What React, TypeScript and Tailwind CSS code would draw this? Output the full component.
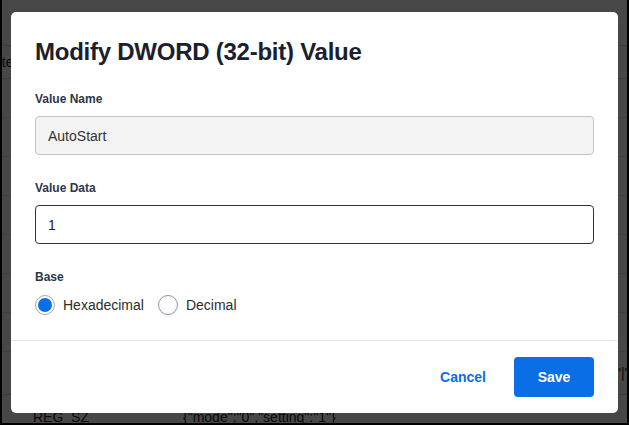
import { useState } from "react";

const rows = [
  { name: "Enabled", type: "REG_DWORD", data: "0x00000001 (1)" },
  { name: "AutoStart", type: "REG_DWORD", data: "0x00000001 (1)" },
  { name: "InstallPath", type: "REG_SZ", data: "C:\\Program Files\\Agent" },
  { name: "Version", type: "REG_SZ", data: "4.2.1" },
  { name: "LogLevel", type: "REG_DWORD", data: "0x00000002 (2)" },
  { name: "Timeout", type: "REG_DWORD", data: "0x0000001e (30)" },
  { name: "Retries", type: "REG_DWORD", data: "0x00000003 (3)" },
];

function Radio({
  label,
  checked,
  onSelect,
}: {
  label: string;
  checked: boolean;
  onSelect: () => void;
}) {
  return (
    <button type="button" onClick={onSelect} className="flex items-center gap-2 h-[22px]">
      {checked ? (
        <span className="flex size-5 rounded-full border border-[#a3a8bd] bg-white p-[2px]">
          <span className="flex-1 rounded-full bg-[#0a6ee6]" />
        </span>
      ) : (
        <span className="size-5 rounded-full border border-[#8e92ad] bg-white" />
      )}
      <span className="text-sm text-[#2d2d2d]">{label}</span>
    </button>
  );
}

export default function App() {
  const [base, setBase] = useState<"hex" | "dec">("hex");
  const [data, setData] = useState("1");

  return (
    <div className="relative h-screen w-screen overflow-hidden border-x-2 border-b-2 border-black bg-white font-['Liberation_Sans',Arial,sans-serif] text-[#222]">
      {/* Registry editor underneath */}
      <div className="flex flex-col text-sm">
        <div className="h-[46px] border-b border-[#cfd3d8]" />
        <div className="flex h-[33px] items-center border-b border-[#cfd3d8]">
          <span className="-ml-[29px]">Delete</span>
        </div>
        {rows.map((row) => (
          <div key={row.name} className="flex h-[39px] items-center border-b border-[#e4e7eb]">
            <span className="w-[181px] pl-[31px]">{row.name}</span>
            <span className="w-[160px]">{row.type}</span>
            <span>{row.data}</span>
          </div>
        ))}
        <div className="flex h-[43px] items-center whitespace-nowrap border-b border-[#cfd3d8]">
          <span className="w-[181px] shrink-0 pl-[31px]">Profile</span>
          <span className="w-[160px] shrink-0">REG_SZ</span>
          <span className="ml-[273px] shrink-0">"|"</span>
        </div>
        <div className="flex h-[43px] items-center whitespace-nowrap">
          <span className="w-[181px] shrink-0 pl-[31px]">REG_SZ</span>
          <span className="shrink-0">{'{"mode":"0","setting":"1"}'}</span>
        </div>
      </div>

      {/* Modal */}
      <div className="absolute inset-0 flex items-center justify-center bg-black/[0.72] pt-[2px]">
        <div className="w-[607px] rounded-[5px] bg-white">
          <div className="px-6 pt-6 pb-6">
            <h2 className="mb-[22px] text-[24px] leading-8 font-bold tracking-[-0.25px] text-[#1a202c]">
              Modify DWORD (32-bit) Value
            </h2>
            <div className="flex flex-col gap-6">
              <div className="flex flex-col">
                <label className="mb-2 text-xs leading-[18px] font-semibold text-[#2d3748]">
                  Value Name
                </label>
                <input
                  readOnly
                  value="AutoStart"
                  className="h-[39px] rounded-[4px] border border-[#c4c4c4] bg-[#f3f3f3] px-3 text-sm text-[#333] outline-none"
                />
              </div>
              <div className="flex flex-col">
                <label className="mb-2 text-xs leading-[18px] font-semibold text-[#2d3748]">
                  Value Data
                </label>
                <input
                  value={data}
                  onChange={(e) => setData(e.target.value)}
                  className="h-[39px] rounded-[4px] border border-[#333] bg-white px-3 text-sm text-[#222] outline-none"
                />
              </div>
              <div className="flex flex-col">
                <span className="mb-2 text-xs leading-[18px] font-semibold text-[#2d3748]">Base</span>
                <div className="flex items-center gap-[14px]">
                  <Radio label="Hexadecimal" checked={base === "hex"} onSelect={() => setBase("hex")} />
                  <Radio label="Decimal" checked={base === "dec"} onSelect={() => setBase("dec")} />
                </div>
              </div>
            </div>
          </div>
          <div className="flex items-center justify-end gap-3 border-t border-[#e2e8f0] px-6 py-4">
            <button className="h-10 px-4 text-sm font-bold text-[#0a6ee6]">Cancel</button>
            <button className="h-10 w-20 rounded-[4px] bg-[#0a6ee6] text-sm font-bold text-white">
              Save
            </button>
          </div>
        </div>
      </div>
    </div>
  );
}
